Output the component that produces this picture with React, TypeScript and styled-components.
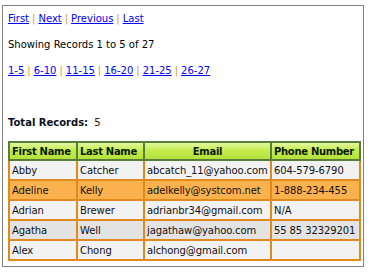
import React from 'react';
import styled, { createGlobalStyle } from 'styled-components';

const GlobalStyle = createGlobalStyle`
  body {
    margin: 0;
    background: #ffffff;
    font-family: 'DejaVu Sans', Verdana, sans-serif;
    font-size: 10px;
    color: #000;
  }
`;

const Panel = styled.div`
  box-sizing: border-box;
  width: 362px;
  height: 262px;
  margin: 5px 0 0 2px;
  padding: 6px 5px 0 5px;
  border: 1px solid #808080;
`;

const Line = styled.div<{ $gap?: number }>`
  line-height: 14px;
  height: 14px;
  margin-bottom: ${(p) => p.$gap ?? 12}px;
  white-space: nowrap;
`;

const NavLink = styled.a`
  color: #0000ff;
  text-decoration: underline;
`;

const Sep = styled.span`
  color: #d8953a;
  margin: 0 3px;
`;

const TotalLabel = styled.span`
  font-weight: bold;
  color: #0a1020;
  margin-right: 6px;
`;

const TotalValue = styled.span`
  color: #3a0a0a;
`;

const Table = styled.table`
  width: 351px;
  border-collapse: collapse;
  table-layout: fixed;
`;

const HeadCell = styled.th<{ $center?: boolean; $w: number }>`
  width: ${(p) => p.$w - 6}px;
  height: 16px;
  padding: 0 2px;
  border: 2px solid #577d3c;
  background: linear-gradient(#e2f7a0 0%, #c4ec4e 45%, #b6e23a 100%);
  font-weight: bold;
  letter-spacing: -0.3px;
  text-align: ${(p) => (p.$center ? 'center' : 'left')};
  color: #0a1a00;
  white-space: nowrap;
  overflow: hidden;
`;

const Row = styled.tr<{ $tone: 'light' | 'mid' | 'hot' }>`
  background: ${(p) =>
    p.$tone === 'hot' ? '#fcb14f' : p.$tone === 'mid' ? '#e3e3e3' : '#f2f2f2'};
`;

const Cell = styled.td`
  height: 18px;
  padding: 0 2px;
  border: 2px solid #e08a1c;
  white-space: nowrap;
  overflow: hidden;
  letter-spacing: -0.1px;
  color: #111;
`;

const pages = ['1-5', '6-10', '11-15', '16-20', '21-25', '26-27'];

const rows: { first: string; last: string; email: string; phone: string; tone: 'light' | 'mid' | 'hot' }[] = [
  { first: 'Abby', last: 'Catcher', email: 'abcatch_11@yahoo.com', phone: '604-579-6790', tone: 'light' },
  { first: 'Adeline', last: 'Kelly', email: 'adelkelly@systcom.net', phone: '1-888-234-455', tone: 'hot' },
  { first: 'Adrian', last: 'Brewer', email: 'adrianbr34@gmail.com', phone: 'N/A', tone: 'light' },
  { first: 'Agatha', last: 'Well', email: 'jagathaw@yahoo.com', phone: '55 85 32329201', tone: 'mid' },
  { first: 'Alex', last: 'Chong', email: 'alchong@gmail.com', phone: '', tone: 'light' },
];

export default function App() {
  return (
    <>
      <GlobalStyle />
      <Panel>
        <Line>
          <NavLink href="#">First</NavLink>
          <Sep>|</Sep>
          <NavLink href="#">Next</NavLink>
          <Sep>|</Sep>
          <NavLink href="#">Previous</NavLink>
          <Sep>|</Sep>
          <NavLink href="#">Last</NavLink>
        </Line>
        <Line>Showing Records 1 to 5 of 27</Line>
        <Line $gap={38}>
          {pages.map((p, i) => (
            <React.Fragment key={p}>
              {i > 0 && <Sep>|</Sep>}
              <NavLink href="#">{p}</NavLink>
            </React.Fragment>
          ))}
        </Line>
        <Line $gap={11}>
          <TotalLabel>Total Records:</TotalLabel>
          <TotalValue>5</TotalValue>
        </Line>
        <Table>
          <thead>
            <tr>
              <HeadCell $w={68}>First Name</HeadCell>
              <HeadCell $w={67}>Last Name</HeadCell>
              <HeadCell $w={127} $center>Email</HeadCell>
              <HeadCell $w={89}>Phone Number</HeadCell>
            </tr>
          </thead>
          <tbody>
            {rows.map((r) => (
              <Row key={r.first} $tone={r.tone}>
                <Cell>{r.first}</Cell>
                <Cell>{r.last}</Cell>
                <Cell>{r.email}</Cell>
                <Cell>{r.phone}</Cell>
              </Row>
            ))}
          </tbody>
        </Table>
      </Panel>
    </>
  );
}
